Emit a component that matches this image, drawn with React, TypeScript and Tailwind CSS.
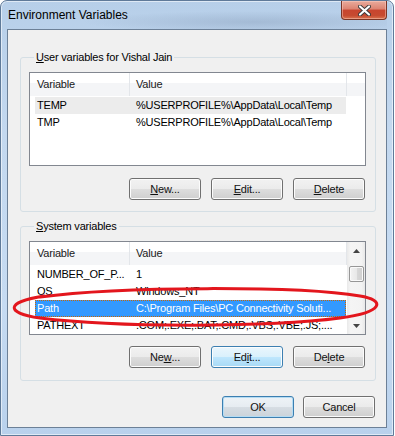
import React from "react";

const btnBase =
  "w-[72px] h-[22px] rounded-[3px] border flex items-center justify-center text-[11px] text-[#111]";
const btnNormal =
  "border-[#707070] bg-[linear-gradient(#f2f2f2_0%,#ebebeb_50%,#dddddd_51%,#cfcfcf_100%)] shadow-[inset_0_0_0_1px_#fcfcfc]";
const btnHover =
  "border-[#3c7fb1] bg-[linear-gradient(#eaf6fd_0%,#d9f0fc_50%,#bee6fd_51%,#a7d9f5_100%)] shadow-[inset_0_0_0_1px_#fcfcfc]";
const btnDefault =
  "border-[#3c7fb1] bg-[linear-gradient(#eef3f7_0%,#e6ecf1_50%,#d6dde3_51%,#cbd3da_100%)] shadow-[inset_0_0_0_1px_#b5dcf3]";

function Btn({ children, kind = "normal" }: { children: React.ReactNode; kind?: "normal" | "hover" | "default" }) {
  const k = kind === "hover" ? btnHover : kind === "default" ? btnDefault : btnNormal;
  return <div className={`${btnBase} ${k}`}>{children}</div>;
}

type Row = { name: string; value: string; state?: "hover" | "selected" };

function HeaderCells({ extra }: { extra: boolean }) {
  return (
    <div className="flex h-[23px] shrink-0 bg-[linear-gradient(#ffffff_0%,#ffffff_42%,#f4f5f7_43%,#f4f5f7_100%)]">
      <div className="w-[100px] shrink-0 pl-[7px] flex items-center border-r border-[#e3e6ea] text-[#1a1a1a]">
        Variable
      </div>
      <div className="w-[217px] shrink-0 pl-[6px] flex items-center border-r border-[#e3e6ea] text-[#1a1a1a]">
        Value
      </div>
      {extra && <div className="flex-1" />}
    </div>
  );
}

function Rows({ rows }: { rows: Row[] }) {
  return (
    <div className="flex flex-col pt-[1px]">
      {rows.map((r) => {
        const cls =
          r.state === "selected"
            ? "bg-[#3399ff] text-white outline-1 outline-dotted outline-[#cc6600] -outline-offset-1"
            : r.state === "hover"
            ? "bg-[#ececec] text-black"
            : "text-black";
        return (
          <div key={r.name} className={`ml-[5px] w-[311px] h-[17px] flex items-center ${cls}`}>
            <div className="w-[99px] shrink-0 pl-[2px] whitespace-nowrap overflow-hidden">{r.name}</div>
            <div className="flex-1 pl-[2px] whitespace-nowrap overflow-hidden">{r.value}</div>
          </div>
        );
      })}
    </div>
  );
}

function Scrollbar() {
  return (
    <div className="w-[18px] shrink-0 flex flex-col bg-[linear-gradient(90deg,#e9e9e9_0%,#f5f5f5_20%,#f3f3f3_80%,#e8e8e8_100%)]">
      <div className="h-[17px] flex items-center justify-center">
        <svg width="7" height="4" viewBox="0 0 7 4">
          <path d="M0 4 L3.5 0 L7 4 Z" fill="#444" />
        </svg>
      </div>
      <div className="mt-[7px] mx-auto w-[15px] h-[16px] rounded-[2px] border border-[#979797] bg-[linear-gradient(90deg,#f3f3f3_0%,#e8e8e8_50%,#d8d8d8_51%,#cfcfcf_100%)] shadow-[inset_0_0_0_1px_#fafafa]" />
      <div className="flex-1" />
      <div className="h-[17px] flex items-center justify-center">
        <svg width="7" height="4" viewBox="0 0 7 4">
          <path d="M0 0 L3.5 4 L7 0 Z" fill="#444" />
        </svg>
      </div>
    </div>
  );
}

export default function App() {
  const userRows: Row[] = [
    { name: "TEMP", value: "%USERPROFILE%\\AppData\\Local\\Temp", state: "hover" },
    { name: "TMP", value: "%USERPROFILE%\\AppData\\Local\\Temp" },
  ];
  const sysRows: Row[] = [
    { name: "NUMBER_OF_P...", value: "1" },
    { name: "OS", value: "Windows_NT" },
    { name: "Path", value: "C:\\Program Files\\PC Connectivity Soluti...", state: "selected" },
    { name: "PATHEXT", value: ".COM;.EXE;.BAT;.CMD;.VBS;.VBE;.JS;...." },
  ];

  return (
    <div className="relative w-[395px] h-[436px] bg-white font-['Liberation_Sans',Arial,sans-serif] text-[11px] tracking-[-0.2px] text-black">
      {/* Window frame */}
      <div className="w-[394px] h-[436px] flex flex-col px-[6px] pb-[7px] rounded-t-[7px] border border-[#5f7a99] bg-[linear-gradient(180deg,#b7cfe9_0%,#c3d8ef_30%,#c6dbf2_70%,#b9d1ec_100%)] shadow-[inset_0_0_0_1px_rgba(255,255,255,0.55)]">
        {/* Title bar */}
        <div className="h-[28px] shrink-0 flex items-start justify-between bg-[radial-gradient(ellipse_45%_40%_at_65%_75%,rgba(90,110,140,0.22),transparent)]">
          <div className="h-[28px] pl-[1px] flex items-center text-[12px] tracking-normal text-black">
            Environment Variables
          </div>
          <div className="w-[46px] h-[19px] rounded-b-[4px] border border-t-0 border-[#7a3526] flex items-center justify-center bg-[linear-gradient(#e9ab9c_0%,#dc8371_45%,#c8452f_50%,#c64a30_80%,#d9734f_100%)] shadow-[inset_0_0_0_1px_rgba(255,210,200,0.45)]">
            <svg width="13" height="11" viewBox="0 0 13 11">
              <path d="M2 1.5 L11 9.5 M11 1.5 L2 9.5" stroke="#3a3a3a" strokeWidth="4" strokeLinecap="round" />
              <path d="M2 1.5 L11 9.5 M11 1.5 L2 9.5" stroke="#ffffff" strokeWidth="2.2" strokeLinecap="round" />
            </svg>
          </div>
        </div>

        {/* Client area */}
        <div className="flex-1 border border-[#6c8097] bg-[#f0f0f0] flex flex-col">
          {/* User variables group */}
          <fieldset className="mt-[20px] ml-[12px] mr-[10px] border border-[#d5dfe5] rounded-[3px] pl-[8px] pr-[9px] pb-[11px]">
            <legend className="ml-[5px] px-[2px] leading-[14px]">
              <span className="underline">U</span>ser variables for Vishal Jain
            </legend>
            <div className="mt-[8px] h-[94px] border border-[#828790] bg-white flex flex-col">
              <HeaderCells extra />
              <Rows rows={userRows} />
            </div>
            <div className="mt-[12px] flex justify-end gap-[10px] pr-[1px]">
              <Btn>
                <span className="underline">N</span>ew...
              </Btn>
              <Btn>
                <span className="underline">E</span>dit...
              </Btn>
              <Btn>
                <span className="underline">D</span>elete
              </Btn>
            </div>
          </fieldset>

          {/* System variables group */}
          <fieldset className="mt-[7px] ml-[12px] mr-[10px] border border-[#d5dfe5] rounded-[3px] pl-[8px] pr-[9px] pb-[12px]">
            <legend className="ml-[5px] px-[2px] leading-[14px]">
              <span className="underline">S</span>ystem variables
            </legend>
            <div className="mt-[8px] h-[94px] border border-[#828790] bg-white flex">
              <div className="w-[317px] shrink-0 flex flex-col">
                <HeaderCells extra={false} />
                <Rows rows={sysRows} />
              </div>
              <Scrollbar />
            </div>
            <div className="mt-[11px] flex justify-end gap-[10px] pr-[1px]">
              <Btn>
                Ne<span className="underline">w</span>...
              </Btn>
              <Btn kind="hover">
                Ed<span className="underline">i</span>t...
              </Btn>
              <Btn>
                De<span className="underline">l</span>ete
              </Btn>
            </div>
          </fieldset>

          {/* OK / Cancel */}
          <div className="mt-[15px] mr-[11px] flex justify-end gap-[9px]">
            <Btn kind="default">OK</Btn>
            <Btn>Cancel</Btn>
          </div>
        </div>
      </div>

      {/* Red hand-drawn annotation ellipse */}
      <svg className="absolute left-0 top-0 pointer-events-none" width="395" height="436" viewBox="0 0 395 436">
        <path
          d="M 40 297 C 120 286, 300 286, 360 296 C 385 300, 385 312, 340 318 C 270 327, 120 328, 40 318 C 5 313, 5 302, 44 296"
          fill="none"
          stroke="#e3161d"
          strokeWidth="3"
          strokeLinecap="round"
        />
      </svg>
    </div>
  );
}
